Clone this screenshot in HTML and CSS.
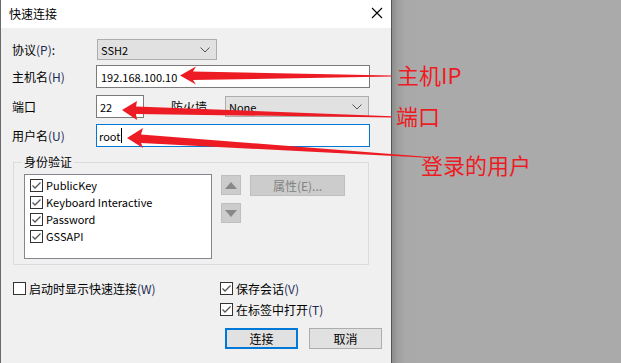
FILE: index.html
```html
<!DOCTYPE html>
<html>
<head>
<meta charset="utf-8">
<link rel="stylesheet" href="styles.css">
</head>
<body>
<div class="screen">
  <div class="dialog">
    <div class="titlebar">
      <span class="title">快速连接</span>
      <svg class="close" width="12" height="12" viewBox="0 0 12 12"><path d="M1 1 L11 11 M11 1 L1 11" stroke="#000" stroke-width="1.1" fill="none"/></svg>
    </div>
    <div class="body">
      <div class="row r1">
        <span class="label">协议<span class="acc">(P)</span>:</span>
        <div class="select sel-proto"><span class="en">SSH2</span><svg width="10" height="6" viewBox="0 0 10 6"><polyline points="0.5,0.5 5,5 9.5,0.5" fill="none" stroke="#555" stroke-width="1"/></svg></div>
      </div>
      <div class="row r2">
        <span class="label">主机名<span class="acc">(H)</span></span>
        <div class="input wide"><span class="en">192.168.100.10</span></div>
      </div>
      <div class="row r3">
        <span class="label">端口</span>
        <div class="input port"><span class="en">22</span></div>
        <span class="fw">防火墙</span>
        <div class="select sel-fw"><span class="en">None</span><svg width="10" height="6" viewBox="0 0 10 6"><polyline points="0.5,0.5 5,5 9.5,0.5" fill="none" stroke="#555" stroke-width="1"/></svg></div>
      </div>
      <div class="row r4">
        <span class="label">用户名<span class="acc">(U)</span></span>
        <div class="input wide focus"><span class="en">root</span><span class="caret"></span></div>
      </div>

      <fieldset class="group">
        <legend>身份验证</legend>
        <div class="group-inner">
          <div class="list">
            <div class="item"><span class="cb on"></span><span class="en">PublicKey</span></div>
            <div class="item"><span class="cb on"></span><span class="en">Keyboard Interactive</span></div>
            <div class="item"><span class="cb on"></span><span class="en">Password</span></div>
            <div class="item"><span class="cb on"></span><span class="en">GSSAPI</span></div>
          </div>
          <div class="arrows">
            <div class="sbtn"><svg width="12" height="7" viewBox="0 0 12 7"><polygon points="6,0 12,7 0,7" fill="#888"/></svg></div>
            <div class="sbtn"><svg width="12" height="7" viewBox="0 0 12 7"><polygon points="0,0 12,0 6,7" fill="#888"/></svg></div>
          </div>
          <div class="prop">属性(E)...</div>
        </div>
      </fieldset>

      <div class="bottom">
        <div class="chk c-start"><span class="cb"></span>启动时显示快速连接<span class="acc">(W)</span></div>
        <div class="chk c-save"><span class="cb on"></span>保存会话<span class="acc">(V)</span></div>
        <div class="chk c-tab"><span class="cb on"></span>在标签中打开<span class="acc">(T)</span></div>
        <div class="buttons">
          <div class="btn default">连接</div>
          <div class="btn">取消</div>
        </div>
      </div>
    </div>
  </div>
  <div class="desk"></div>

  <svg class="overlay" width="621" height="363" viewBox="0 0 621 363">
    <polygon fill="#ed1c24" points="180,75.5 196,66.5 193,71.5 392,75.6 392,76.6 193,80 196,84.5"/>
    <polygon fill="#ed1c24" points="122,110 137,101 136,106.5 392,116.3 392,117.5 136,114 137,120"/>
    <polygon fill="#ed1c24" points="127,138 143,128 141,134.5 423,156.6 423,157.6 141,143 143,148"/>
  </svg>
  <div class="note n1">主机IP</div>
  <div class="note n2">端口</div>
  <div class="note n3">登录的用户</div>
</div>
</body>
</html>
```

FILE: styles.css
```css
* { box-sizing: border-box; }
html, body { margin: 0; padding: 0; }
body {
  width: 621px;
  height: 363px;
  overflow: hidden;
  font-family: "Microsoft YaHei", "Noto Sans CJK SC", sans-serif;
  font-size: 12px;
  color: #000;
  background: #aaaaaa;
}
.en { font-size: 11px; }
.screen {
  position: relative;
  width: 621px;
  height: 363px;
  display: flex;
}
.dialog {
  width: 392px;
  height: 363px;
  background: #f0f0f0;
  border-left: 1px solid #6a6a6a;
  border-right: 1px solid #555;
  display: flex;
  flex-direction: column;
  flex: none;
}
.desk {
  flex: 1;
  background: linear-gradient(to right, #8c8c8c 0px, #9f9f9f 6px, #a9a9a9 14px, #aaaaaa 30px);
}
.titlebar {
  height: 28px;
  background: #fff;
  display: flex;
  align-items: center;
  justify-content: space-between;
  padding: 0 8px 2px 8px;
  flex: none;
}
.title { font-size: 12px; }

.body { padding: 11px 0 0 11px; }
.row { display: flex; align-items: center; }
.r1 { height: 21px; }
.r2 { height: 23px; margin-top: 5px; }
.r3 { height: 23px; margin-top: 7px; }
.r4 { height: 23px; margin-top: 6px; }
.label { width: 84px; flex: none; }
.acc { color: #1b2a55; }

.select {
  height: 21px;
  background: #e1e1e1;
  border: 1px solid #adadad;
  display: flex;
  align-items: center;
  justify-content: space-between;
  padding: 0 6px 0 3px;
}
.sel-proto { width: 120px; margin-left: 1px; }
.sel-fw { width: 144px; }
.input {
  height: 23px;
  background: #fff;
  border: 1px solid #7a7a7a;
  display: flex;
  align-items: center;
  padding-left: 4px;
}
.wide { width: 274px; }
.port { width: 48px; padding-left: 3px; }
.focus { border-color: #0078d7; padding-left: 2px; }
.caret { display: inline-block; width: 1px; height: 15px; background: #000; margin-left: 1px; }
.fw { margin-left: 27px; width: 54px; }

.group {
  margin: 7px 0 0 1px;
  padding: 4px 10px 5px 10px;
  width: 356px;
  border: 1px solid #dcdcdc;
  min-width: 0;
}
.group legend { padding: 0 2px; margin-left: -2px; line-height: 16px; }
.group-inner { display: flex; align-items: flex-start; }
.list {
  width: 188px;
  height: 85px;
  background: #fff;
  border: 1px solid #828790;
  padding: 2px 0 0 5px;
  flex: none;
}
.item { height: 17px; display: flex; align-items: center; line-height: 17px; }
.cb {
  width: 13px;
  height: 13px;
  border: 1px solid #333;
  background: #fff;
  margin-right: 3px;
  flex: none;
  display: inline-block;
}
.cb.on {
  background: #fff url("data:image/svg+xml,%3Csvg xmlns='http://www.w3.org/2000/svg' width='11' height='11' viewBox='0 0 11 11'%3E%3Cpolyline points='1.5,5.5 4,8 9.5,2.5' fill='none' stroke='%23555' stroke-width='1.3'/%3E%3C/svg%3E") center/11px 11px no-repeat;
}
.arrows { display: flex; flex-direction: column; gap: 8px; margin: 1px 0 0 9px; }
.sbtn {
  width: 20px; height: 20px;
  background: #cccccc;
  border: 1px solid #bfbfbf;
  display: flex; align-items: center; justify-content: center;
}
.prop {
  width: 95px; height: 21px;
  margin: 1px 0 0 9px;
  background: #cccccc;
  border: 1px solid #bfbfbf;
  color: #838383;
  display: flex; align-items: center; justify-content: center;
}

.bottom {
  display: grid;
  grid-template-columns: 207px 1fr;
  grid-template-rows: 17px 17px auto;
  row-gap: 4px;
  margin-top: 15px;
  margin-left: 1px;
}
.chk { display: flex; align-items: center; }
.c-start { grid-column: 1; grid-row: 1; }
.c-save { grid-column: 2; grid-row: 1; }
.c-tab { grid-column: 2; grid-row: 2; }
.buttons { grid-column: 2; grid-row: 3; display: flex; gap: 11px; margin: 6px 0 0 5px; }
.btn {
  width: 73px; height: 21px;
  background: #e1e1e1;
  border: 1px solid #adadad;
  display: flex; align-items: center; justify-content: center;
}
.btn.default { border: 2px solid #0078d7; }

.overlay { position: absolute; left: 0; top: 0; pointer-events: none; }
.note {
  position: absolute;
  color: #ed1c24;
  font-size: 22px;
  line-height: 26px;
  white-space: nowrap;
}
.n1 { left: 397px; top: 61px; }
.n2 { left: 396px; top: 102px; }
.n3 { left: 421px; top: 151px; }
```
